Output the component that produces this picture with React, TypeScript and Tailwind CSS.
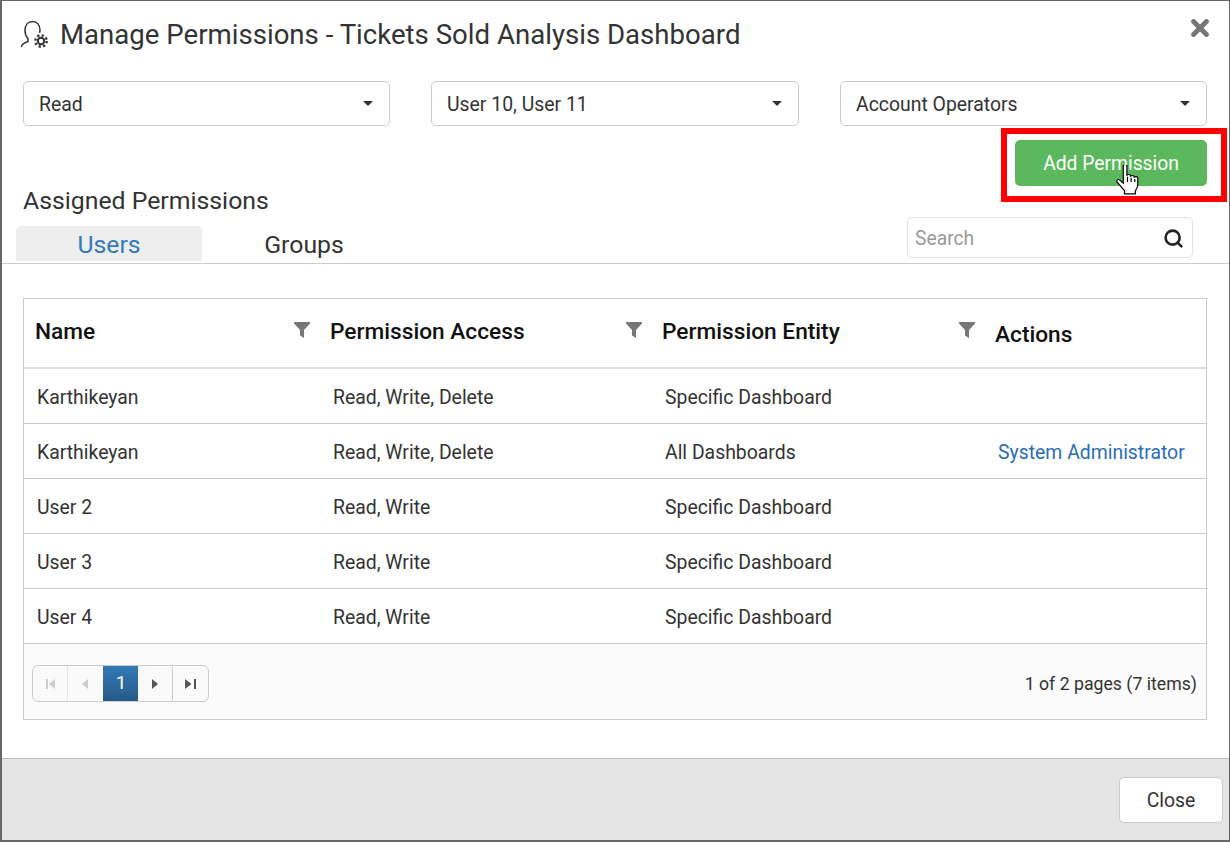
import { Search, X } from "lucide-react";

const rows = [
  { name: "Karthikeyan", access: "Read, Write, Delete", entity: "Specific Dashboard", action: "" },
  { name: "Karthikeyan", access: "Read, Write, Delete", entity: "All Dashboards", action: "System Administrator" },
  { name: "User 2", access: "Read, Write", entity: "Specific Dashboard", action: "" },
  { name: "User 3", access: "Read, Write", entity: "Specific Dashboard", action: "" },
  { name: "User 4", access: "Read, Write", entity: "Specific Dashboard", action: "" },
];

function Select({ label, width }: { label: string; width: string }) {
  return (
    <div className={`flex h-[45px] ${width} items-center justify-between rounded-[5px] border border-[#ccc] pl-[15px] pr-[16px] text-[19.4px] text-[#333]`}>
      <span className="pt-[3px]">{label}</span>
      <span className="h-0 w-0 border-x-[5px] border-t-[5px] border-x-transparent border-t-[#333]" />
    </div>
  );
}

function Funnel() {
  return (
    <svg width="16" height="16" viewBox="0 0 16 16" className="shrink-0">
      <path d="M0 0h16v1.500L10 8v8L6 13.500V8L0 1.500z" fill="#777" />
    </svg>
  );
}

function HeadCell({ label, width }: { label: string; width: string }) {
  return (
    <div className={`flex items-center justify-between ${width} pl-[11px] pr-[9px]`}>
      <span className="text-[22.7px] font-medium text-[#111]">{label}</span>
      <span className="-mt-[4px]">
        <Funnel />
      </span>
    </div>
  );
}

function PagerIcon({ kind, color }: { kind: "first" | "prev" | "next" | "last"; color: string }) {
  const paths = {
    first: "M2 1h2v10H2zM11 1v10L5 6z",
    prev: "M9 1v10L3 6z",
    next: "M3 1v10l6-5z",
    last: "M10 1h2v10h-2zM1 1v10l6.500-5z",
  };
  return (
    <svg width="13" height="12" viewBox="0 0 13 12">
      <path d={paths[kind]} fill={color} />
    </svg>
  );
}

function HandCursor() {
  return (
    <svg
      width="23"
      height="31"
      viewBox="1 1 19 29"
      preserveAspectRatio="none"
      className="absolute left-[1114px] top-[164px]"
    >
      <path
        d="M7 2c0-2 3-2 3 0v9c0-1.500 3-1.500 3 0v1c0-1.500 3-1.500 3 0v1c0-1.500 3-1.500 3 0v6c0 3-1 4-2 6v3H8v-3L2 17c-1-2 1-3 2-2l3 3z"
        fill="#fff"
        stroke="#000"
        strokeWidth="1"
      />
      <path d="M10.500 12v5M13.500 13v4M16.500 14v3" stroke="#000" strokeWidth="1" />
    </svg>
  );
}

export default function App() {
  return (
    <div
      className="relative flex h-[842px] w-[1230px] flex-col overflow-hidden border-2 border-r border-t-[1px] border-[#666] bg-white text-[#333]"
      style={{ fontFamily: "Roboto, sans-serif" }}
    >
      {/* title */}
      <div className="flex h-[66px] items-center pl-[18px] pr-[16px]">
        <svg width="30" height="32" viewBox="0 0 30 32" fill="none" stroke="#333" strokeWidth="1.500" className="shrink-0">
          <path
            d="M1.500 28.500c.3-2.500 2-3.500 6.500-5v-3c-2-2-3-5-3-8C5 7 8 3.500 12.500 3.500S20 7 20 12c0 .8-.1 1.500-.3 2.200"
            strokeLinecap="round"
          />
          <circle cx="21" cy="23" r="3.200" strokeWidth="2" />
          <circle cx="21" cy="23" r="5.700" strokeWidth="2.400" strokeDasharray="2.200 2.270" />
        </svg>
        <h1 className="ml-[10px] flex-1 pt-[2px] text-[27.6px] leading-none font-normal text-[#333]">
          Manage Permissions - Tickets Sold Analysis Dashboard
        </h1>
        <X size={26} strokeWidth={4.500} className="-mt-[12px] text-[#777]" />
      </div>

      {/* pickers */}
      <div className="mt-[14px] flex gap-[41px] pl-[21px]">
        <Select label="Read" width="w-[367px]" />
        <Select label="User 10, User 11" width="w-[368px]" />
        <Select label="Account Operators" width="w-[367px]" />
      </div>

      <div className="mt-[14px] flex justify-end pr-[22px]">
        <button className="h-[46px] w-[192px] rounded-[5px] bg-[#5cb85c] pt-[3px] text-[19.3px] text-white">Add Permission</button>
      </div>

      <div className="pl-[21px] text-[24.8px] leading-[30px] text-[#333]">Assigned Permissions</div>

      {/* tabs */}
      <div className="relative mt-[10px] flex h-[38px] items-start border-b border-[#ccc] pl-[14px]">
        <div className="flex h-[35px] w-[186px] items-center justify-center rounded-t-[5px] bg-[#eee] pt-[3px] text-[24.8px] text-[#337ab7]">
          Users
        </div>
        <div className="flex h-[35px] w-[204px] items-center justify-center pt-[3px] text-[24.8px] text-[#333]">Groups</div>
        <div className="absolute left-[905px] top-[-9px] flex h-[41px] w-[286px] items-center justify-between rounded-[5px] border border-[#e5e5e5] bg-white pl-[7px] pr-[8px] text-[19.3px] text-[#999]">
          <span className="pt-[3px]">Search</span>
          <Search size={21} strokeWidth={3} className="mt-[2px] text-[#222]" />
        </div>
      </div>

      {/* grid */}
      <div className="mx-[21px] mt-[34px] h-[422px] w-[1184px] border border-[#ccc]">
        <div className="flex h-[70px] items-center border-b-2 border-[#ddd] pb-[2px]">
          <HeadCell label="Name" width="w-[295px]" />
          <HeadCell label="Permission Access" width="w-[332px]" />
          <HeadCell label="Permission Entity" width="w-[333px]" />
          <span className="mt-[6px] pl-[11px] text-[22.7px] font-medium text-[#111]">Actions</span>
        </div>
        {rows.map((r, i) => (
          <div key={i} className="flex h-[55px] items-center border-b border-[#ccc] pt-[3px] text-[19.4px] text-[#333]">
            <div className="w-[295px] pl-[13px]">{r.name}</div>
            <div className="w-[332px] pl-[14px]">{r.access}</div>
            <div className="w-[332px] pl-[14px]">{r.entity}</div>
            <div className="pl-[15px] text-[#2a6db5]">{r.action}</div>
          </div>
        ))}
        <div className="flex h-[75px] items-center justify-between bg-[#fbfbfb] pl-[8px] pr-[9px] pt-[4px]">
          <div className="flex h-[37px] w-[177px] overflow-hidden rounded-[6px] border border-[#ccc] bg-[#fafafa]">
            <div className="flex w-[35px] items-center justify-center border-r border-[#e5e5e5]">
              <PagerIcon kind="first" color="#ccc" />
            </div>
            <div className="flex w-[35px] items-center justify-center">
              <PagerIcon kind="prev" color="#ccc" />
            </div>
            <div className="flex w-[35px] items-center justify-center bg-gradient-to-b from-[#337ab7] to-[#265a88] pl-[1px] text-[19px] text-white">
              1
            </div>
            <div className="flex w-[35px] items-center justify-center border-r border-[#ccc]">
              <PagerIcon kind="next" color="#555" />
            </div>
            <div className="flex flex-1 items-center justify-center">
              <PagerIcon kind="last" color="#555" />
            </div>
          </div>
          <span className="pt-[2px] text-[17.7px] text-[#333]">1 of 2 pages (7 items)</span>
        </div>
      </div>

      {/* footer */}
      <div className="mt-auto flex h-[82px] items-center justify-end border-t border-[#bbb] bg-[#e4e4e4] pr-[6px]">
        <button className="mt-[1px] h-[46px] w-[104px] rounded-[5px] border border-[#ccc] bg-white pt-[2px] text-[19.4px] text-[#333]">
          Close
        </button>
      </div>

      {/* annotation over the screenshot */}
      <div className="absolute left-[999px] top-[127px] h-[74px] w-[226px] border-[6px] border-[#f00]" />
      <HandCursor />
    </div>
  );
}
